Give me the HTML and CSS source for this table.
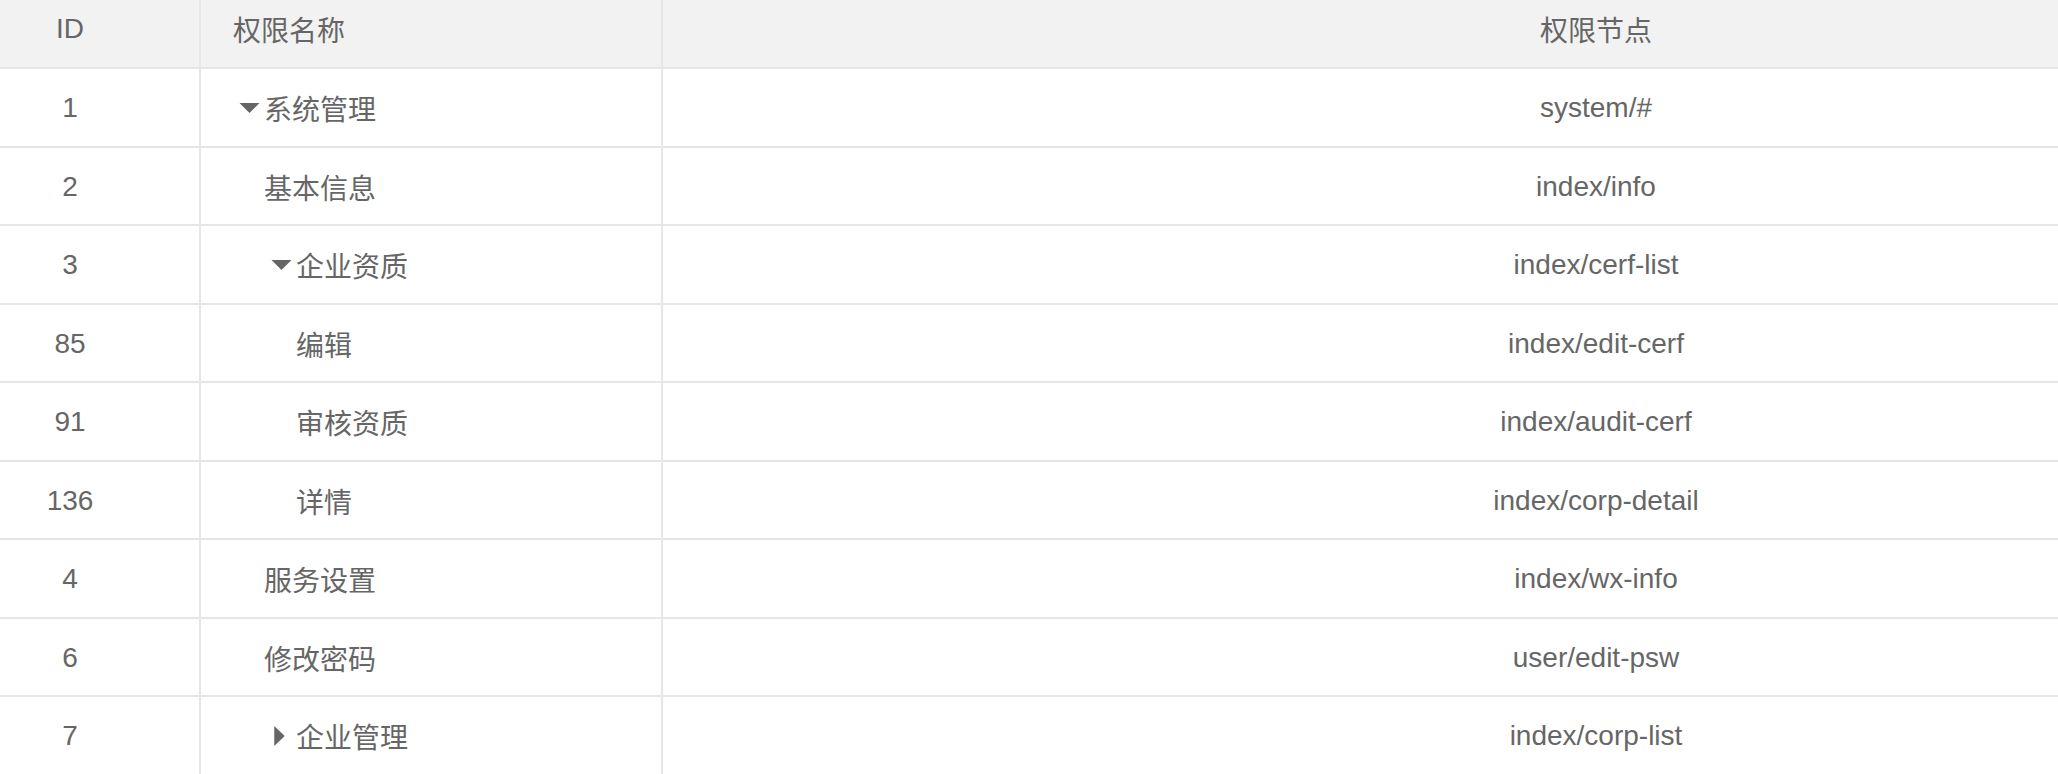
FILE: index.html
```html
<!DOCTYPE html>
<html lang="zh-CN">
<head>
<meta charset="utf-8">
<title>权限列表</title>
<link rel="stylesheet" href="styles.css">
</head>
<body>
<table class="perm-table">
  <colgroup>
    <col class="col-id">
    <col class="col-name">
    <col class="col-node">
  </colgroup>
  <thead>
    <tr>
      <th class="cell-id">ID</th>
      <th class="cell-name">权限名称</th>
      <th class="cell-node">权限节点</th>
    </tr>
  </thead>
  <tbody>
    <tr>
      <td class="cell-id">1</td>
      <td class="cell-name"><span class="tree lvl-1"><span class="toggle"><svg class="tri-down" viewBox="0 0 20 10"><path d="M0 0H20L10 10Z"/></svg></span><span class="label">系统管理</span></span></td>
      <td class="cell-node">system/#</td>
    </tr>
    <tr>
      <td class="cell-id">2</td>
      <td class="cell-name"><span class="tree lvl-1"><span class="toggle"></span><span class="label">基本信息</span></span></td>
      <td class="cell-node">index/info</td>
    </tr>
    <tr>
      <td class="cell-id">3</td>
      <td class="cell-name"><span class="tree lvl-2"><span class="toggle"><svg class="tri-down" viewBox="0 0 20 10"><path d="M0 0H20L10 10Z"/></svg></span><span class="label">企业资质</span></span></td>
      <td class="cell-node">index/cerf-list</td>
    </tr>
    <tr>
      <td class="cell-id">85</td>
      <td class="cell-name"><span class="tree lvl-2"><span class="toggle"></span><span class="label">编辑</span></span></td>
      <td class="cell-node">index/edit-cerf</td>
    </tr>
    <tr>
      <td class="cell-id">91</td>
      <td class="cell-name"><span class="tree lvl-2"><span class="toggle"></span><span class="label">审核资质</span></span></td>
      <td class="cell-node">index/audit-cerf</td>
    </tr>
    <tr>
      <td class="cell-id">136</td>
      <td class="cell-name"><span class="tree lvl-2"><span class="toggle"></span><span class="label">详情</span></span></td>
      <td class="cell-node">index/corp-detail</td>
    </tr>
    <tr>
      <td class="cell-id">4</td>
      <td class="cell-name"><span class="tree lvl-1"><span class="toggle"></span><span class="label">服务设置</span></span></td>
      <td class="cell-node">index/wx-info</td>
    </tr>
    <tr>
      <td class="cell-id">6</td>
      <td class="cell-name"><span class="tree lvl-1"><span class="toggle"></span><span class="label">修改密码</span></span></td>
      <td class="cell-node">user/edit-psw</td>
    </tr>
    <tr>
      <td class="cell-id">7</td>
      <td class="cell-name"><span class="tree lvl-2"><span class="toggle"><svg class="tri-right" viewBox="0 0 10 19"><path d="M0 0L10 9.5L0 19Z"/></svg></span><span class="label">企业管理</span></span></td>
      <td class="cell-node">index/corp-list</td>
    </tr>
  </tbody>
</table>
</body>
</html>
```

FILE: styles.css
```css
html, body {
  margin: 0;
  padding: 0;
  background: #ffffff;
  overflow: hidden;
}

body {
  font-family: "Liberation Sans", "Noto Sans CJK SC", sans-serif;
  font-size: 28px;
  color: #666666;
}

.perm-table {
  border-collapse: separate;
  border-spacing: 0;
  table-layout: fixed;
  width: 2529px;
}

.col-id { width: 201px; }
.col-name { width: 462px; }
.col-node { width: 1866px; }

.perm-table th,
.perm-table td {
  padding: 0;
  font-weight: normal;
  vertical-align: middle;
  white-space: nowrap;
  border-bottom: 2px solid #e6e6e6;
  border-right: 2px solid #e6e6e6;
}

.perm-table th {
  background: #f2f2f2;
  height: 56px;
  padding-bottom: 10px;
  padding-top: 1px;
}

.perm-table td {
  height: 74.5px;
  padding-top: 2px;
}

.perm-table .cell-node {
  border-right: none;
  text-align: center;
}

.cell-id {
  text-align: center;
  padding-right: 59px !important;
}

.perm-table th.cell-name {
  text-align: left;
  padding-left: 32px;
}

.perm-table td.cell-name {
  padding-left: 32px;
}

.tree {
  display: flex;
  align-items: center;
}

.lvl-2 {
  padding-left: 32px;
}

.toggle {
  display: flex;
  align-items: center;
  justify-content: center;
  width: 31px;
  height: 30px;
  flex: none;
}

.tri-down {
  width: 21px;
  height: 10px;
  fill: #666666;
  margin-left: 1px;
}

.tri-right {
  width: 11px;
  height: 20px;
  fill: #666666;
  margin-left: -2px;
}

.label {
  display: block;
}
```
